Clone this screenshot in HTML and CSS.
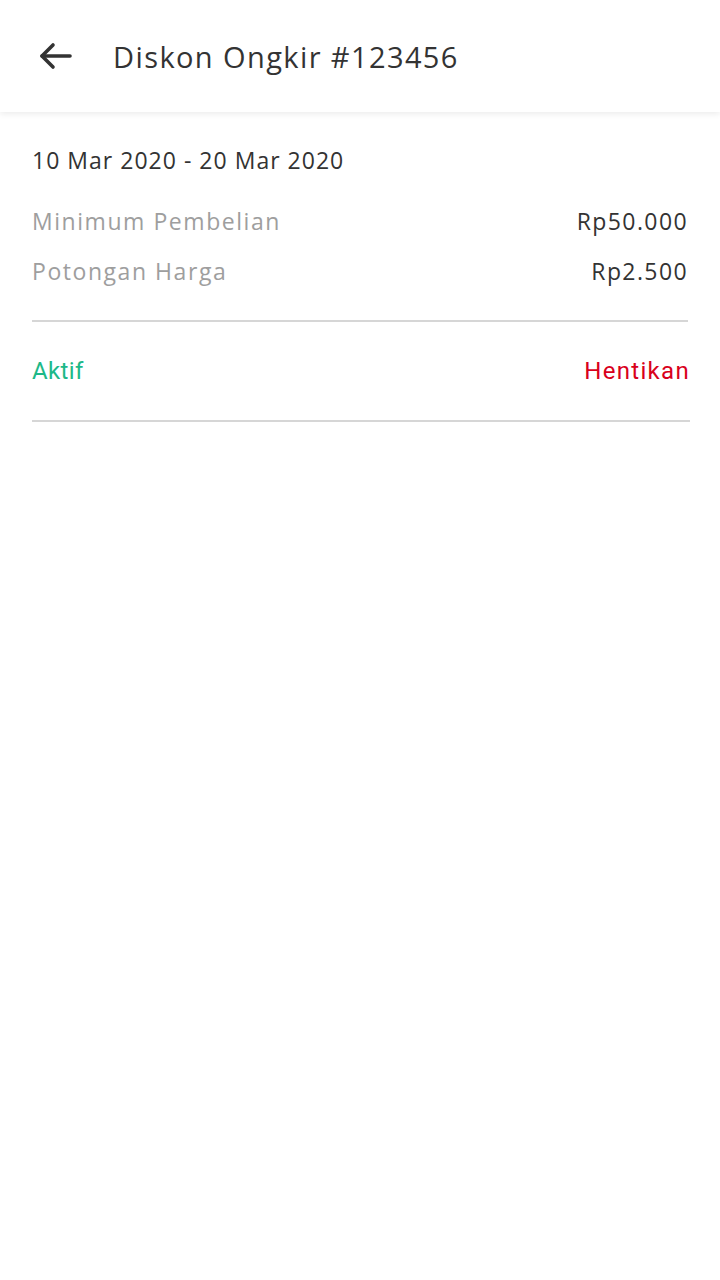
FILE: index.html
```html
<!DOCTYPE html>
<html lang="id">
<head>
<meta charset="utf-8">
<title>Diskon Ongkir #123456</title>
<link rel="stylesheet" href="styles.css">
</head>
<body>
<header class="appbar">
  <button class="back" aria-label="Kembali">
    <svg width="34" height="28" viewBox="0 0 34 28" fill="none" stroke="#333" stroke-width="3.6" stroke-linecap="round" stroke-linejoin="round">
      <path d="M32 14H4"/>
      <path d="M15 3L4 14L15 25"/>
    </svg>
  </button>
  <h1 class="title">Diskon Ongkir #123456</h1>
</header>
<main class="content">
  <p class="period">10 Mar 2020 - 20 Mar 2020</p>
  <div class="rows">
    <div class="row"><span class="label">Minimum Pembelian</span><span class="value">Rp50.000</span></div>
    <div class="row"><span class="label">Potongan Harga</span><span class="value">Rp2.500</span></div>
  </div>
  <div class="status">
    <span class="active">Aktif</span>
    <span class="stop">Hentikan</span>
  </div>
</main>
</body>
</html>
```
FILE: styles.css
```css
* { box-sizing: border-box; }
html, body { margin: 0; padding: 0; background: #fff; }
body { font-family: "Open Sans", "Noto Sans", sans-serif; color: #333; }
.appbar {
  height: 112px;
  display: flex;
  align-items: center;
  padding-left: 38px;
  background: #fff;
  box-shadow: 0 2px 6px rgba(0,0,0,0.08);
}
.back {
  border: 0; background: none; padding: 0; margin: 0;
  width: 36px; height: 28px; display: flex; align-items: center;
}
.title {
  margin: 0 0 0 39px;
  font-size: 29px;
  font-weight: 500;
  color: #333;
  letter-spacing: 1.4px;
}
.content { padding: 0 32px 0 32px; }
.period {
  margin: 0;
  padding-top: 33px;
  font-size: 23px;
  line-height: 30px;
  letter-spacing: 1.02px;
  color: #333;
}
.rows {
  display: flex; flex-direction: column; gap: 20px;
  margin-top: 31px;
  padding-bottom: 34px;
  border-bottom: 2px solid #d6d6d6;
}
.row { display: flex; justify-content: space-between; font-size: 23px; line-height: 30px; }
.label { color: #9e9e9e; letter-spacing: 1.55px; }
.value { color: #333; letter-spacing: 1.4px; }
.status {
  display: flex; justify-content: space-between; align-items: center;
  height: 100px;
  margin-right: -2px;
  border-bottom: 2px solid #d6d6d6;
  font-family: Roboto, "Open Sans", sans-serif;
  font-size: 24px;
}
.active { color: #1db888; letter-spacing: 0.4px; }
.stop { color: #d9001b; letter-spacing: 1.3px; }
```
